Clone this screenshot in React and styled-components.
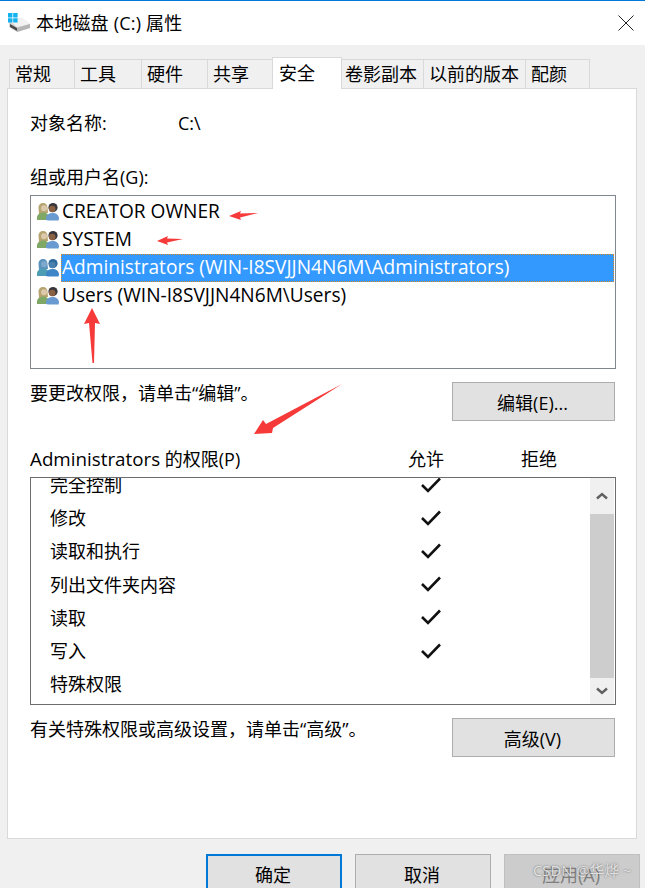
import React from "react";
import styled, { createGlobalStyle } from "styled-components";

const GlobalStyle = createGlobalStyle`
  html, body {
    margin: 0;
    padding: 0;
    height: 888px;
    overflow: hidden;
    background: #f0f0f0;
  }
  * {
    box-sizing: border-box;
  }
`;

const Dialog = styled.div`
  position: relative;
  width: 645px;
  height: 888px;
  overflow: hidden;
  display: flex;
  flex-direction: column;
  background: #f0f0f0;
  color: #000;
  font-family: "Open Sans", "Noto Sans CJK SC", sans-serif;
  font-size: 18px;
`;

const TitleBar = styled.div`
  height: 45px;
  flex: none;
  display: flex;
  align-items: center;
  padding: 0 11px 0 8px;
  background: #fff;
  border-top: 1px solid #0078d7;
`;

const TitleText = styled.div`
  flex: 1;
  margin-left: 6px;
  line-height: 24px;
  letter-spacing: 0.2px;
`;

const TabBar = styled.div`
  height: 44px;
  flex: none;
  display: flex;
  align-items: flex-end;
  padding-left: 9px;
  margin-bottom: -1px;
  position: relative;
  z-index: 1;
`;

const Tab = styled.div`
  width: ${({ $width }) => $width}px;
  height: ${({ $active }) => ($active ? 32 : 30)}px;
  padding-top: ${({ $active }) => ($active ? 3 : 2)}px;
  padding-left: ${({ $inset }) => $inset}px;
  line-height: 25px;
  white-space: nowrap;
  background: ${({ $active }) => ($active ? "#fff" : "#f0f0f0")};
  border: 1px solid #d9d9d9;
  border-bottom: ${({ $active }) => ($active ? "none" : "1px solid #d9d9d9")};
  margin-left: -1px;
  &:first-child {
    margin-left: 0;
  }
`;

const Panel = styled.div`
  width: 630px;
  height: 751px;
  flex: none;
  margin-left: 7px;
  padding: 22px 20px 0 22px;
  background: #fff;
  border: 1px solid #d9d9d9;
`;

const Line = styled.div`
  display: flex;
  line-height: 24px;
  height: 24px;
  margin-top: ${({ $top }) => $top || 0}px;
`;

const ObjectLabel = styled.span`
  width: 148px;
`;

const ListBox = styled.div`
  height: 174px;
  margin-top: 6px;
  padding-top: 2px;
  background: #fff;
  border: 1px solid #82878f;
`;

const Principal = styled.div`
  height: 28px;
  display: flex;
  align-items: center;
  padding: 0 1px 0 6px;
`;

const PrincipalName = styled.div`
  flex: 1;
  height: 28px;
  margin-left: 1px;
  padding-left: 1px;
  font-size: 19.1px;
  line-height: 27px;
  white-space: nowrap;
  color: ${({ $selected }) => ($selected ? "#fff" : "#000")};
  background: ${({ $selected }) => ($selected ? "#3399ff" : "transparent")};
  outline: ${({ $selected }) => ($selected ? "1px dotted #d98a2b" : "none")};
  outline-offset: -1px;
`;

const ActionRow = styled.div`
  display: flex;
  justify-content: space-between;
  align-items: flex-start;
  margin-top: 13px;
  padding-right: 1px;
`;

const Hint = styled.div`
  line-height: 24px;
  margin-top: -1px;
`;

const Button = styled.div`
  width: ${({ $width }) => $width}px;
  height: 39px;
  flex: none;
  display: flex;
  align-items: center;
  justify-content: center;
  padding-right: 2px;
  color: ${({ $disabled }) => ($disabled ? "#7f7f7f" : "#000")};
  background: ${({ $disabled }) => ($disabled ? "#cccccc" : "#e1e1e1")};
  border: ${({ $primary }) => ($primary ? "2px solid #0078d7" : "1px solid #adadad")};
  border-color: ${({ $disabled }) => ($disabled ? "#bfbfbf" : undefined)};
`;

const PermHeader = styled.div`
  display: grid;
  grid-template-columns: 378px 113px 1fr;
  height: 24px;
  line-height: 24px;
  margin-top: 26px;
`;

const LatinWord = styled.span`
  font-size: 18.8px;
`;

const PermBox = styled.div`
  height: 228px;
  margin-top: 6px;
  display: flex;
  background: #fff;
  border: 1px solid #6d6d6d;
  overflow: hidden;
`;

const PermRows = styled.div`
  flex: 1;
  margin-top: -9px;
`;

const PermRow = styled.div`
  height: 33.2px;
  display: grid;
  grid-template-columns: 369px 24px;
  align-items: center;
  padding-left: 19px;
  line-height: 33px;
`;

const CheckWrap = styled.span`
  display: flex;
  margin: -2px 0 0 1px;
`;

const ScrollBar = styled.div`
  width: 24px;
  margin-right: 1px;
  flex: none;
  display: flex;
  flex-direction: column;
  background: #f0f0f0;
`;

const ScrollArrow = styled.div`
  height: ${({ $height }) => $height}px;
  flex: none;
  display: flex;
  align-items: center;
  justify-content: center;
`;

const ScrollThumb = styled.div`
  flex: 1;
  background: #cdcdcd;
`;

const Footer = styled.div`
  display: flex;
  gap: 13px;
  margin-top: 15px;
  padding-left: 206px;
`;

const Watermark = styled.div`
  position: absolute;
  left: 533px;
  top: 859px;
  font-size: 14.8px;
  line-height: 22px;
  white-space: nowrap;
  color: rgba(235, 235, 235, 0.9);
  text-shadow: 0 0 2px rgba(70, 70, 70, 0.75);
`;

const Annotations = styled.svg`
  position: absolute;
  left: 0;
  top: 0;
  pointer-events: none;
`;

const DriveIcon = () => (
  <svg width="22" height="20" viewBox="0 0 22 20">
    <path d="M1 7 L14 5 L22 11 L22 15 L9 19 L1 14 Z" fill="#d4d4d4" />
    <path d="M1 7 L14 5 L22 11 L9 14 Z" fill="#f2f2f2" />
    <path d="M2 11 L9 15 L9 18 L2 14 Z" fill="#4a4a4a" />
    <path d="M9 15 L22 11 L22 15 L9 19 Z" fill="#b5b5b5" />
    <path d="M0 0 L4.4 0 L4.4 4.4 L0 4.4 Z M5.2 0 L9.6 0 L9.6 4.4 L5.2 4.4 Z M0 5.2 L4.4 5.2 L4.4 9.6 L0 9.6 Z M5.2 5.2 L9.6 5.2 L9.6 9.6 L5.2 9.6 Z" fill="#14b2ee" />
  </svg>
);

const CloseIcon = () => (
  <svg width="16" height="16" viewBox="0 0 16 16">
    <path d="M0.5 0.5 L15.5 15.5 M15.5 0.5 L0.5 15.5" stroke="#222" strokeWidth="1" fill="none" />
  </svg>
);

const UsersIcon = ({ selected }) => {
  const hair = selected ? "#5a93bd" : "#b5a46f";
  const skin = selected ? "#7fa9cc" : "#dcc8aa";
  const green = selected ? "#4d9db5" : "#7fa765";
  const dark = selected ? "#2f6a9c" : "#37363a";
  const face = selected ? "#4a7fae" : "#8a6042";
  const blue = selected ? "#3f86c6" : "#6a9bd0";
  return (
    <svg width="23" height="18" viewBox="0 0 23 18" style={{ flex: "none" }}>
      <path d="M1.5 5 C1.5 1.5 3.5 0 6 0 C9 0 10.5 2 10.5 5 L11 10 L2 11 Z" fill={hair} />
      <circle cx="7" cy="5.3" r="3" fill={skin} />
      <path d="M0 17 L0 14 C0.5 11 3.5 9.5 6.5 9.5 C9 9.5 11 11 11.5 13 L11.5 17 Z" fill={green} />
      <circle cx="16" cy="4.6" r="4.6" fill={dark} />
      <circle cx="15.2" cy="6" r="3.3" fill={face} />
      <path d="M9 17 L9 14.5 C9.5 11.5 12 10 15.5 10 C19 10 22 12 22 15.5 L21.5 17.5 L11 17.5 Z" fill={blue} />
    </svg>
  );
};

const CheckIcon = () => (
  <svg width="22" height="18" viewBox="0 0 22 18">
    <path d="M2 9 L8 15 L20 2.5" stroke="#111" strokeWidth="2.6" fill="none" />
  </svg>
);

const Chevron = ({ down }) => (
  <svg width="12" height="8" viewBox="0 0 12 8">
    <path d={down ? "M1 1.5 L6 6 L11 1.5" : "M1 6.5 L6 2 L11 6.5"} stroke="#606060" strokeWidth="2.4" fill="none" />
  </svg>
);

const tabs = [
  { label: "常规", width: 66, inset: 5 },
  { label: "工具", width: 68, inset: 5 },
  { label: "硬件", width: 67, inset: 5 },
  { label: "共享", width: 66, inset: 5 },
  { label: "安全", width: 70, inset: 6, active: true },
  { label: "卷影副本", width: 83, inset: 3 },
  { label: "以前的版本", width: 103, inset: 5 },
  { label: "配颜", width: 65, inset: 5 },
];

const principals = [
  { name: "CREATOR OWNER" },
  { name: "SYSTEM" },
  { name: "Administrators (WIN-I8SVJJN4N6M\\Administrators)", selected: true },
  { name: "Users (WIN-I8SVJJN4N6M\\Users)" },
];

const permissions = [
  { name: "完全控制", allowed: true },
  { name: "修改", allowed: true },
  { name: "读取和执行", allowed: true },
  { name: "列出文件夹内容", allowed: true },
  { name: "读取", allowed: true },
  { name: "写入", allowed: true },
  { name: "特殊权限" },
];

const App = () => (
  <Dialog>
    <GlobalStyle />
    <TitleBar>
      <DriveIcon />
      <TitleText>本地磁盘 (C:) 属性</TitleText>
      <CloseIcon />
    </TitleBar>
    <TabBar>
      {tabs.map((tab) => (
        <Tab key={tab.label} $width={tab.width} $inset={tab.inset} $active={tab.active}>
          {tab.label}
        </Tab>
      ))}
    </TabBar>
    <Panel>
      <Line>
        <ObjectLabel>对象名称:</ObjectLabel>
        <span>C:\</span>
      </Line>
      <Line $top={30}>组或用户名(G):</Line>
      <ListBox>
        {principals.map((p) => (
          <Principal key={p.name}>
            <UsersIcon selected={p.selected} />
            <PrincipalName $selected={p.selected}>{p.name}</PrincipalName>
          </Principal>
        ))}
      </ListBox>
      <ActionRow>
        <Hint>要更改权限，请单击“编辑”。</Hint>
        <Button $width={163}>编辑(E)...</Button>
      </ActionRow>
      <PermHeader>
        <span>
          <LatinWord>Administrators</LatinWord> 的权限(P)
        </span>
        <span>允许</span>
        <span>拒绝</span>
      </PermHeader>
      <PermBox>
        <PermRows>
          {permissions.map((perm) => (
            <PermRow key={perm.name}>
              <span>{perm.name}</span>
              {perm.allowed && (
                <CheckWrap>
                  <CheckIcon />
                </CheckWrap>
              )}
            </PermRow>
          ))}
        </PermRows>
        <ScrollBar>
          <ScrollArrow $height={36}>
            <Chevron />
          </ScrollArrow>
          <ScrollThumb />
          <ScrollArrow $height={26}>
            <Chevron down />
          </ScrollArrow>
        </ScrollBar>
      </PermBox>
      <ActionRow>
        <Hint>有关特殊权限或高级设置，请单击“高级”。</Hint>
        <Button $width={163}>高级(V)</Button>
      </ActionRow>
    </Panel>
    <Footer>
      <Button $width={136} $primary>确定</Button>
      <Button $width={136}>取消</Button>
      <Button $width={136} $disabled>应用(A)</Button>
    </Footer>
    <Watermark>CSDN @华烨 ~</Watermark>
    <Annotations width="645" height="888" viewBox="0 0 645 888">
      <g fill="#f63a3a">
        <polygon points="229,216 241,211 240,213.5 258,213 240,217.5 241,220" />
        <polygon points="157,241 168,236 167,238.5 183,239 167,242.5 168,245" />
        <polygon points="92,308 100,324 95,323 94,363 92.5,363 89,323 84,324" />
        <polygon points="254,434 263,420 266,424 342,384 273,428 272,433" />
      </g>
    </Annotations>
  </Dialog>
);

export default App;
